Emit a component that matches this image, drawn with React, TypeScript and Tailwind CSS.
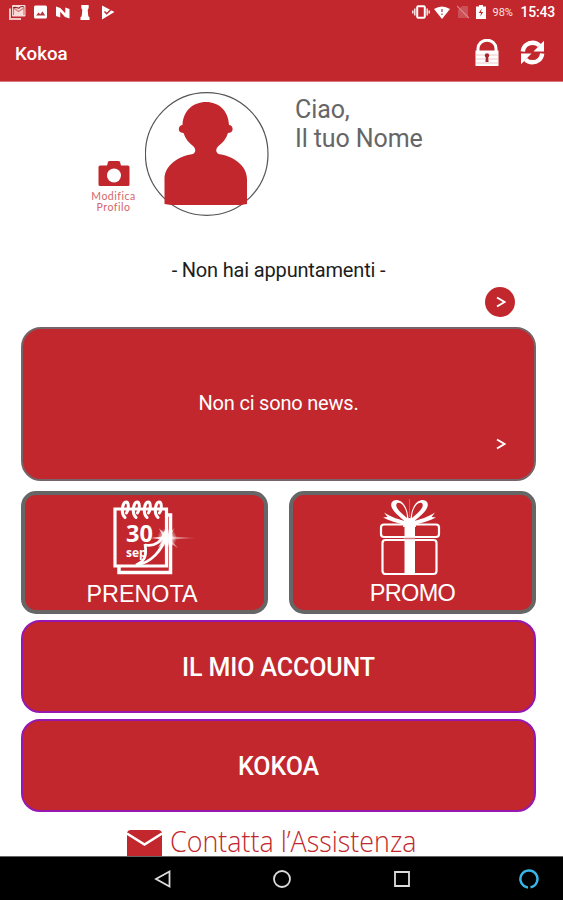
import type { ReactNode } from 'react'

interface MenuButtonProps {
  label: string
  className?: string
}

interface TileProps {
  icon: ReactNode
  label: ReactNode
}

function StatusBar() {
  return (
    <div className="flex h-6 items-center justify-between pl-[9px] pr-2 text-white">
      <div className="flex items-center">
        <svg width="17" height="16" viewBox="0 0 17 16">
          <path d="M1 4.5V15h11" fill="none" stroke="#f3c5c5" strokeWidth="2" />
          <rect x="3" y="1" width="13.5" height="11.5" rx="1" fill="#f8dcda" />
          <path d="M4.5 11V4l5 3.5L15 4v7" fill="none" stroke="#d97778" strokeWidth="1.2" />
          <path d="M4 4c3-2 5 1 6 0s3-2 5-1" fill="none" stroke="#8f2226" strokeWidth="1.1" />
        </svg>
        <svg className="ml-2" width="13" height="14" viewBox="0 0 13 14">
          <rect width="13" height="13" y=".5" rx="1.5" fill="white" />
          <path d="m2 10.5 2.6-3 1.7 1.7 2.2-3 2.7 4.3z" fill="#b8373d" />
        </svg>
        <svg className="ml-[9px]" width="14" height="13" viewBox="0 0 14 13">
          <path d="M0 .5 4.3 2l5 5.2V1.5L13.5 3v9.5L9 11 4.2 5.8v5.7L0 10z" fill="white" />
        </svg>
        <svg className="ml-[10px]" width="10" height="16" viewBox="0 0 10 16">
          <path d="M1.3 1h7.4v3L7.7 6l.6 6.3 1.2 1V16H.5v-2.7l1.2-1L2.3 6l-1-2z" fill="white" />
        </svg>
        <svg className="ml-[11px]" width="14" height="15" viewBox="0 0 14 15">
          <path d="M1 .5 13.5 7 1 14.5z" fill="white" />
          <path d="m3.5 6.5 2.2 2.3L11 3.5" fill="none" stroke="#c1272d" strokeWidth="1.5" />
        </svg>
      </div>
      <div className="flex items-center">
        <svg width="18" height="14" viewBox="0 0 18 14">
          <rect x="5.2" y="1.3" width="7.6" height="11.4" rx="1" fill="none" stroke="white" strokeWidth="2" />
          <path d="M2.8 3.5v7M.8 5.5v3M15.2 3.5v7M17.2 5.5v3" stroke="#fbe3e3" strokeWidth="1.5" />
        </svg>
        <svg className="ml-1" width="16" height="13" viewBox="0 0 16 13">
          <path d="M0 3Q8-2 16 3L8 13z" fill="white" />
          <path d="M8 3v3M8 7.5V9" stroke="#a7656b" strokeWidth="1.5" />
        </svg>
        <svg className="ml-[7px]" width="12" height="14" viewBox="0 0 12 14">
          <path d="M5 1h6v12H1V5z" fill="#cb5157" />
          <path d="m0 1 12 12" stroke="#dc8a8d" strokeWidth="1.2" />
        </svg>
        <svg className="ml-[7px]" width="10" height="14" viewBox="0 0 10 14">
          <path d="M3 0h4v1.5h3V14H0V1.5h3z" fill="white" />
          <path d="M5.7 3.5 2.8 8H5l-.7 3.5L7.2 7H5z" fill="#c1272d" />
        </svg>
        <span className="ml-[6px] w-[21px] text-[11px] leading-none text-[#fbe3e3]">98%</span>
        <span className="ml-[7px] text-[14px] leading-none font-medium tracking-[-0.2px]">15:43</span>
      </div>
    </div>
  )
}

function LockIcon() {
  return (
    <svg width="24" height="28" viewBox="0 0 24 28">
      <path d="M3 12V9.5a9 8.3 0 0 1 18 0V12" fill="none" stroke="white" strokeWidth="3" />
      <path d="M.5 11.5h23V27H.5z" fill="white" />
      <path d="M.5 16h23M.5 20h23M.5 24h23" stroke="#e9b7b9" strokeWidth=".8" />
      <circle cx="12" cy="16.5" r="2.2" fill="#a9272d" />
      <path d="M11 17h2l.6 6h-3.2z" fill="#a9272d" />
    </svg>
  )
}

function RefreshIcon() {
  return (
    <svg width="25" height="25" viewBox="0 0 25 25">
      <path d="M2.8 11.5C3.5 5.500 8 2.700 12.500 2.700c3 0 5.500 1.200 7 3" fill="none" stroke="white" strokeWidth="4.4" />
      <path d="M24 .8v10.700H13.500z" fill="white" />
      <path d="M22.200 13.500c-.7 6-5.200 8.800-9.700 8.800-3 0-5.500-1.200-7-3" fill="none" stroke="white" strokeWidth="4.4" />
      <path d="M1 24.200V13.500h10.500z" fill="white" />
    </svg>
  )
}

function Avatar() {
  return (
    <svg width="124" height="124" viewBox="0 0 124 124">
      <circle cx="61.700" cy="62" r="61.300" fill="white" stroke="#555" strokeWidth="1.2" />
      <path
        d="M61 10c-13 0-23 9-23.500 23-4 0-5 6-1.500 7.500l2.500.5c2 6 5.500 10 9.500 13 3 3 3 6 0 8-14 2-28.500 11-28.500 25v25l6.500 1h70l6-1V87c0-14-14.500-23-28.500-25-3-2-3-5 0-8 4-3 7.500-7 9.500-13l2.500-.5C89 39 88 33 84 33 83.500 19 74 10 61 10z"
        fill="#c1272d"
      />
    </svg>
  )
}

function CameraIcon() {
  return (
    <svg width="32" height="26" viewBox="0 0 32 26">
      <path d="M2 4.500h7L10 1q.3-1 1.500-1h9q1.200 0 1.500 1l1 3.500h7q1.500 0 1.500 1.500v17.500q0 1.500-1.500 1.500H2Q.5 25 .5 23.500V6Q.5 4.500 2 4.500z" fill="#c1272d" />
      <circle cx="16" cy="14.500" r="7" fill="white" />
    </svg>
  )
}

function Chevron() {
  return (
    <svg width="10" height="12" viewBox="0 0 10 12">
      <path d="m1 1.500 7.500 4.500L1 10.500" fill="none" stroke="white" strokeWidth="2" />
    </svg>
  )
}

function CalendarIcon() {
  return (
    <svg width="90" height="78" viewBox="0 0 90 78">
      <defs>
        <linearGradient id="ray">
          <stop offset="0" stopColor="white" />
          <stop offset="1" stopColor="white" stopOpacity="0" />
        </linearGradient>
        <radialGradient id="glow">
          <stop offset="0" stopColor="white" />
          <stop offset="0.4" stopColor="white" stopOpacity="0.8" />
          <stop offset="1" stopColor="white" stopOpacity="0" />
        </radialGradient>
      </defs>
      <g fill="none" stroke="white">
        <path d="M6 69v5.500h51.500V17H54" strokeWidth="3.5" />
        <path d="M2 11h51.500v57H2z" strokeWidth="3.2" />
        <path
          d="M12 19.500c-5-5-2-15.500 1-15.500 3 0 3 7 .5 11M23 19.500c-5-5-2-15.500 1-15.500 3 0 3 7 .5 11M34 19.500c-5-5-2-15.500 1-15.500 3 0 3 7 .5 11M45 19.500c-5-5-2-15.500 1-15.500 3 0 3 7 .5 11"
          strokeWidth="3"
          strokeLinecap="round"
        />
      </g>
      <text x="13" y="44" fill="white" fontFamily="Open Sans, sans-serif" fontSize="23.5" fontWeight="700">30</text>
      <text x="13" y="59" fill="white" fontFamily="Open Sans, sans-serif" fontSize="12" fontWeight="700">sep</text>
      <g fill="none" stroke="white">
        <path d="M32 46c2 12 0 17-9 21 15-2 26-14 31-31" strokeWidth="2.800" />
        <path d="M32 47c9 2 17-3 21-14" strokeWidth="2.800" />
      </g>
      <circle cx="54" cy="40" r="10" fill="url(#glow)" />
      <path d="m54 23 1.500 13 6-6-4 8.500L86 40l-28.500 1.500L65 50l-9-5.500-2 7-2-7-7 5 5-8-12-1.500 12-1.500-4-8 6 5z" fill="url(#ray)" />
    </svg>
  )
}

function GiftIcon() {
  return (
    <svg width="62" height="78" viewBox="0 0 62 78">
      <g fill="none" stroke="white" strokeWidth="2.2">
        <rect x="2" y="26.500" width="58" height="12.500" rx="3" />
        <rect x="3.500" y="42" width="54" height="34" rx="3" />
      </g>
      <path
        d="M30 26C20 19 9 10 13 4c3-4 10-2 13 4 3 5 3.500 12 4 18zm-2-6c0-5-1-8-3.500-12-2.500-3.500-6-4-7-2-1.500 4 5 9 10.500 14zM31 26c10-7 21-16 17-22-3-4-10-2-13 4-3 5-3.500 12-4 18zm2-6c0-5 1-8 3.500-12 2.500-3.500 6-4 7-2 1.500 4-5 9-10.500 14z"
        fill="white"
      />
      <path d="M25.500 24H36v52H25.500z" fill="white" />
      <path d="M27 27C18 25 10 23 4 19.500l4.500-.5L5 14.500c8 5 15 7 23 9zM34 27c9-2 17-4 23-7.500l-4.500-.5 3.500-4.500c-8 5-15 7-23 9z" fill="white" />
      <path d="M25 22q5.500-4 11 0l1 7H24z" fill="white" />
      <path d="M25.500 40.500H36" stroke="#d77c80" strokeWidth="1.5" />
      <path d="M30.500 1v18" stroke="#da7073" strokeWidth=".8" />
    </svg>
  )
}

function Tile({ icon, label }: TileProps) {
  return (
    <button className="flex h-[123px] flex-1 flex-col items-center rounded-[15px] border-[4px] border-[#666] bg-[#c1272d] pt-[3px] pr-[5px] font-['Liberation_Sans',sans-serif] text-white">
      <span className="flex h-[78px] items-start">{icon}</span>
      <span className="mt-[6px] text-[23.3px] leading-6">{label}</span>
    </button>
  )
}

function MenuButton({ label, className = '' }: MenuButtonProps) {
  return (
    <button className={`block h-[93px] w-full shrink-0 rounded-[19px] border-2 border-[#9718b0] bg-[#c1272d] pt-[3px] text-[25px] font-medium tracking-[-0.1px] text-white ${className}`}>
      {label}
    </button>
  )
}

export default function App() {
  return (
    <div className="flex h-[900px] w-[563px] flex-col overflow-hidden bg-white font-[Roboto,sans-serif]">
      <header className="h-[82px] shrink-0 border-b border-[#d9797c] bg-[#c1272d]">
        <StatusBar />
        <div className="flex h-[57px] items-center pl-[15px] pr-[18px]">
          <h1 className="flex-1 pt-[3px] text-[18.7px] font-medium text-white">Kokoa</h1>
          <LockIcon />
          <span className="ml-[21px]"><RefreshIcon /></span>
        </div>
      </header>

      <main className="flex h-[774px] shrink-0 flex-col pl-[21px] pr-[27px]">
        <section className="flex h-[135px] shrink-0 pt-[10px]">
          <div className="flex w-[124px] flex-col items-center pl-[61px] pt-[69px] text-center">
            <CameraIcon />
            <p className="mt-[4px] font-[Lato,sans-serif] text-[10.5px] leading-[11px] tracking-[0.5px] text-[#d4666a]">
              Modifica<br />Profilo
            </p>
          </div>
          <Avatar />
          <p className="ml-[26px] pt-[3px] text-[25px] leading-[29px] tracking-[-0.1px] text-[#666]">
            Ciao,<br />Il tuo Nome
          </p>
        </section>

        <p className="mt-[41px] text-center text-[20px] leading-6 tracking-[-0.17px] text-[#1c1c1c]">- Non hai appuntamenti -</p>
        <div className="flex justify-end pr-[21px] pt-[5px]">
          <button className="flex size-[30px] items-center justify-center rounded-full bg-[#c1272d] pl-px">
            <Chevron />
          </button>
        </div>

        <section className="mt-[10px] flex h-[154px] shrink-0 flex-col rounded-[20px] border-2 border-[#766568] bg-[#c1272d] text-white">
          <p className="pt-[62px] text-center text-[20px] leading-6 tracking-[-0.2px]">Non ci sono news.</p>
          <div className="flex justify-end pr-[28px] pt-[23px]">
            <Chevron />
          </div>
        </section>

        <div className="mt-[10px] flex shrink-0 gap-[21px]">
          <Tile icon={<span className="pl-[32px]"><CalendarIcon /></span>} label="PRENOTA" />
          <Tile icon={<GiftIcon />} label={<span className="relative -top-px pl-[5px] text-[23.5px] tracking-[-0.7px]">PROMO</span>} />
        </div>

        <MenuButton label="IL MIO ACCOUNT" className="mt-[6px]" />
        <MenuButton label="KOKOA" className="mt-[6px]" />

        <a className="mt-[9px] flex h-[35px] shrink-0 items-start overflow-hidden pl-[106px] text-[#c1272d]">
          <svg className="mt-[9px] shrink-0" width="35" height="30" viewBox="0 0 35 30">
            <path d="M4 0h27q4 0 4 4v22q0 4-4 4H4q-4 0-4-4V4q0-4 4-4z" fill="#c1272d" />
            <path d="m0 3.500 17.500 11L35 3.500" fill="none" stroke="white" strokeWidth="2.5" />
          </svg>
          <span className="ml-[8px] mt-[3px] origin-left scale-x-[0.895] whitespace-nowrap font-['Open_Sans',sans-serif] text-[30px] leading-[34px] font-[330]">
            Contatta l’Assistenza
          </span>
        </a>
      </main>

      <nav className="flex h-[44px] shrink-0 items-center border-t border-[#666] bg-black pl-[153px]">
        <svg width="19" height="20" viewBox="0 0 19 20">
          <path d="M16.500 2.500v15L3 10z" fill="none" stroke="#ddd" strokeWidth="1.8" />
        </svg>
        <svg className="ml-[100px]" width="20" height="20" viewBox="0 0 20 20">
          <circle cx="10" cy="10" r="8" fill="none" stroke="#ddd" strokeWidth="1.8" />
        </svg>
        <svg className="ml-[101px]" width="18" height="18" viewBox="0 0 18 18">
          <path d="M2 2h14v14H2z" fill="none" stroke="#ddd" strokeWidth="1.8" />
        </svg>
        <svg className="ml-[107px]" width="22" height="22" viewBox="0 0 22 22">
          <path d="M10 19.400a8.500 8.500 0 1 1 2.500-.1" fill="none" stroke="#38b6e8" strokeWidth="2.5" />
        </svg>
      </nav>
    </div>
  )
}
